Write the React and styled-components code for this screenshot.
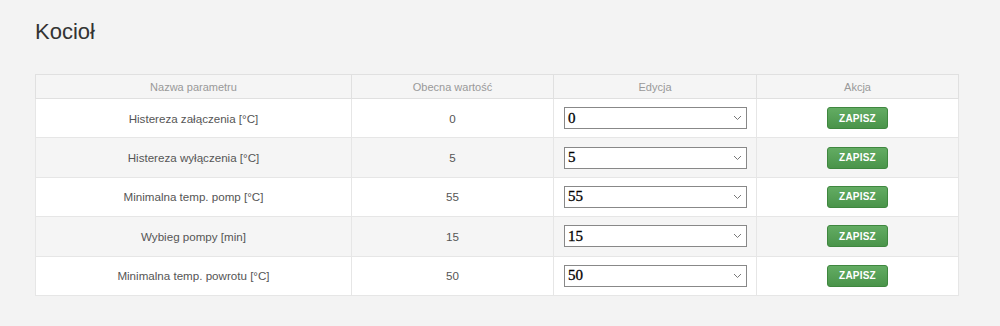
import styled, { createGlobalStyle } from 'styled-components';

const GlobalStyle = createGlobalStyle`
  html, body {
    margin: 0;
    padding: 0;
    background: #f3f3f3;
    font-family: "Liberation Sans", Arial, sans-serif;
  }
`

const params = [
  { name: 'Histereza załączenia [°C]', value: 0 },
  { name: 'Histereza wyłączenia [°C]', value: 5 },
  { name: 'Minimalna temp. pomp [°C]', value: 55 },
  { name: 'Wybieg pompy [min]', value: 15 },
  { name: 'Minimalna temp. powrotu [°C]', value: 50 },
]

const Chevron = () => (
  <svg width="9" height="6" viewBox="0 0 9 6">
    <path d="M1 1 L4.5 4.5 L8 1" fill="none" stroke="#777" strokeWidth="1" />
  </svg>
)

const App = () => {
  return (<>
    <GlobalStyle />
    <Page>
      <Title>Kocioł</Title>
      <Table>
        <thead>
          <tr>
            <Th>Nazwa parametru</Th>
            <Th>Obecna wartość</Th>
            <Th>Edycja</Th>
            <Th>Akcja</Th>
          </tr>
        </thead>
        <tbody>
          {params.map((p, i) => (
            <Row key={p.name} $odd={i % 2 === 1}>
              <Td>{p.name}</Td>
              <Td>{p.value}</Td>
              <Td>
                <Select>
                  <span>{p.value}</span>
                  <Chevron />
                </Select>
              </Td>
              <Td>
                <Button>ZAPISZ</Button>
              </Td>
            </Row>
          ))}
        </tbody>
      </Table>
    </Page>
  </>);
}

const Page = styled.div`
  width: 1000px;
  height: 326px;
  padding: 19px 0 0 35px;
  box-sizing: border-box;
`
const Title = styled.h1`
  margin: 0 0 29px 0;
  font-size: 22px;
  font-weight: normal;
  color: #333;
  line-height: 26px;
`
const Table = styled.table`
  width: 924px;
  border-collapse: collapse;
  background: #fff;
  border: 1px solid #ddd;
  table-layout: fixed;
`
const Th = styled.th`
  height: 23px;
  padding: 0;
  font-size: 11px;
  font-weight: normal;
  color: #999;
  background: #f5f5f5;
  border: 1px solid #e0e0e0;
  text-align: center;
  &:first-child { width: 315px; }
  &:nth-child(2) { width: 201px; }
  &:nth-child(3) { width: 202px; }
`
const Row = styled.tr`
  background: ${p => p.$odd ? '#f5f5f5' : '#fff'};
`
const Td = styled.td`
  height: 38.4px;
  padding: 0;
  font-size: 11.6px;
  color: #555;
  text-align: center;
  border: 1px solid #e6e6e6;
  &:nth-child(3) { text-align: left; padding-left: 10px; }
`
const Select = styled.div`
  width: 183px;
  height: 22px;
  box-sizing: border-box;
  display: flex;
  align-items: center;
  justify-content: space-between;
  padding: 0 4px 0 3px;
  background: #fff;
  border: 1px solid #888;
  font-family: "Liberation Serif", "Times New Roman", serif;
  font-size: 15px;
  color: #000;
  -webkit-text-stroke: 0.3px #000;
`
const Button = styled.div`
  display: inline-flex;
  align-items: center;
  justify-content: center;
  width: 61px;
  height: 22px;
  box-sizing: border-box;
  border-radius: 3px;
  border: 1px solid #3f873f;
  background: linear-gradient(#63ac63, #4a944a);
  color: #fff;
  font-size: 10px;
  font-weight: bold;
  letter-spacing: 0.2px;
`

export default App
